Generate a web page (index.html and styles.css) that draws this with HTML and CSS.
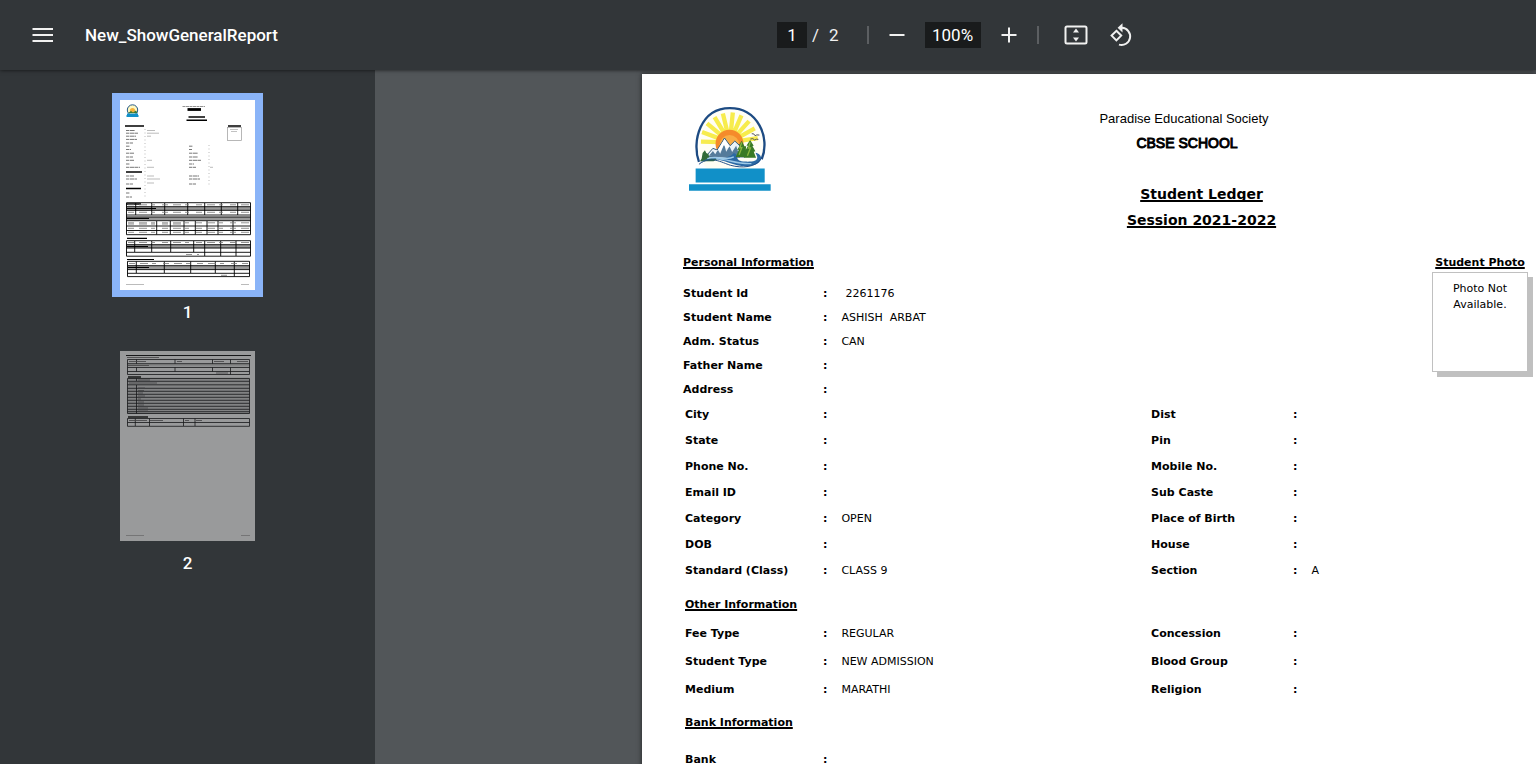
FILE: index.html
```html
<!DOCTYPE html>
<html lang="en">
<head>
<meta charset="utf-8">
<title>New_ShowGeneralReport</title>
<link rel="stylesheet" href="styles.css">
</head>
<body>
<header class="toolbar">
  <div class="toolbar-start">
    <button class="icon-button menu-button" type="button" aria-label="Menu">
      <svg width="22" height="16" viewBox="0 0 22 16" stroke="currentColor" stroke-width="2"><path d="M0.500 2H21M0.500 8H21M0.500 14H21"/></svg>
    </button>
    <h1 class="file-name">New_ShowGeneralReport</h1>
  </div>
  <div class="toolbar-controls">
    <input class="field page-field" type="text" value="1" aria-label="Page number">
    <span class="page-total"><span>/</span><span>2</span></span>
    <span class="divider"></span>
    <button class="icon-button zoom-out" type="button" aria-label="Zoom out">
      <svg width="16" height="16" viewBox="0 0 16 16" stroke="currentColor" stroke-width="2"><path d="M0.500 8H15.500"/></svg>
    </button>
    <input class="field zoom-field" type="text" value="100%" aria-label="Zoom level">
    <button class="icon-button zoom-in" type="button" aria-label="Zoom in">
      <svg width="16" height="16" viewBox="0 0 16 16" stroke="currentColor" stroke-width="2"><path d="M0.500 8H15.500M8 0.500V15.500"/></svg>
    </button>
    <span class="divider"></span>
    <button class="icon-button fit-button" type="button" aria-label="Fit to page">
      <svg width="24" height="20" viewBox="0 0 24 20"><rect x="1.500" y="1.500" width="21" height="17" rx="1.500" fill="none" stroke="currentColor" stroke-width="2"/><path d="M12 3.500L15 7.500H9ZM12 16.500L9 12.500H15Z" fill="currentColor"/></svg>
    </button>
    <button class="icon-button" type="button" aria-label="Rotate counterclockwise">
      <svg width="24" height="24" viewBox="0 0 24 24" fill="none" stroke="currentColor" stroke-width="2"><path d="M7.400 7.800L12.200 12.600L7.400 17.400L2.600 12.600Z"/><path d="M11 4.800H13A8.600 8.600 0 1 1 10 21.600"/><path d="M13.500 0.200V9.400L8.600 4.800Z" fill="currentColor" stroke="none"/></svg>
    </button>
  </div>
</header>
<div class="workspace">
  <nav class="sidebar" aria-label="Page thumbnails">
    <a class="thumb thumb-current" href="#page-1">
      <span class="thumb-frame">
      <svg class="thumb-page" width="135" height="190" viewBox="0 0 135 190">
        <rect width="135" height="190" fill="#fff"/>
        <circle cx="12.500" cy="10" r="5.200" fill="#fff8c0" stroke="#24588b"/>
        <circle cx="12.500" cy="10.500" r="2.600" fill="#f7b23b"/>
        <path d="M8 13L11 11L13 12.500L16 10.500L17.500 13Z" fill="#397a36"/>
        <path d="M7 14.500H18M6.500 16H18.500" stroke="#1290c8" stroke-width="2"/>
        <g stroke="#000" fill="none">
          <path d="M62.500 6.500H85" stroke="#666" stroke-width="0.700" stroke-dasharray="3 .5"/>
          <path d="M67.500 9.500H81" stroke-width="2.800"/>
          <path d="M68.500 17H85M66.500 20.200H87" stroke-width="1.400"/>
          <path d="M5 26H24M108 26H121M6 72H22M6 88.500H21M6 104H21" stroke-width="1.500"/>
        </g>
        <g stroke="#777" stroke-width="1" stroke-dasharray="3 .6 5 .4">
          <path d="M6 30.500H15M6 33.200H18M6 36.200H16M6 39.400H17M6 43H13M6 46.200H10M6 49.500H11M6 53.200H14M6 57H13M6 60.300H14M6 64H10M6 67.300H20M6 76H14M6 79H17M6 84H13M6 93H10M6 97H12"/>
          <path d="M69 46.200H73M69 49.500H72M69 53.200H78M69 57H78M69 60.300H81M69 64H74M69 67.300H76M69 76H79M69 79H80M69 84H76"/>
        </g>
        <g stroke="#aaa" stroke-width="0.800">
          <path d="M27 30.500H35M27 33.200H39M27 36.200H31M27 60.300H32M27 67.300H34M27 76H34M27 79H40M27 83H34M90 67.300H93"/>
          <path d="M25 29V99M89 45V85" stroke-dasharray="1 2.500"/>
          <path d="M6 184.500H24M121 184.500H129"/>
        </g>
        <rect x="107.500" y="27.500" width="14" height="13" fill="#fff" stroke="#999" stroke-width="0.700"/>
        <path d="M110 29.500H118M111 31.500H117" stroke="#999" stroke-width="0.600"/>
        <path d="M6.500 108.500H130.500M6.500 118.500H130.500M6.500 146.500H130.500M7.500 167.500H129.500" stroke="#999" stroke-width="3.500"/>
        <g fill="none" stroke="#000" stroke-width="0.900">
          <path d="M6.500 102.700H130.500V134.700H6.500ZM6.500 106.700H130.500M6.500 110.300H130.500M6.500 115H130.500M6.500 117H130.500M6.500 120.700H130.500M6.500 126H130.500M6.500 130.500H130.500"/>
          <path d="M15.700 103V115M31.700 103V115M44.700 103V115M67.700 103V115M84.700 103V115M101.300 103V115M117.700 103V115M36.700 121V134.500M50.300 121V134.500M64 121V134.500M75.300 121V134.500M87 121V134.500M98 121V134.500M113 121V134.500"/>
          <path d="M6.500 140.700H130.500V156.200H6.500ZM6.500 144.700H130.500M6.500 148H130.500M6.500 152.300H130.500M14.700 141V152M31.700 141V152M50.700 141V152M73.700 141V152M84.700 141V156M100.700 141V156M116 141V156"/>
          <path d="M7.500 161.300H129.500V176.600H7.500ZM7.500 165.700H129.500M7.500 169.600H129.500M7.500 173.300H129.500M16.300 161.500V173M44.300 161.500V173M70.700 161.500V173M95.300 161.500V173M114.300 161.500V176.500"/>
          <path d="M7 138.300H27M7 159.500H34M7 108.500H36M7 118.500H29M7 146.500H28M8 167.500H29" stroke-width="1.200"/>
        </g>
        <path d="M8 104.800H129M8 112.300H129M8 122.800H129M8 124H64M8 128.300H129M8 132.300H129M8 142.500H129M66 154.500H79M9 163.500H128M101 175.300H112" stroke="#777" stroke-width="0.800" stroke-dasharray="6 5 8 4 4 7"/>
      </svg>
      </span>
      <span class="thumb-label">1</span>
    </a>
    <a class="thumb" href="#page-2">
      <span class="thumb-frame">
      <svg class="thumb-page" width="135" height="190" viewBox="0 0 135 190">
        <rect width="135" height="190" fill="#999a9b"/>
        <path d="M7.500 14H129.500M7.500 28H129.500" stroke="#858687" stroke-width="3"/>
        <rect x="7.500" y="28" width="122" height="35" fill="#818283"/>
        <g fill="none" stroke="#171819" stroke-width="0.800">
          <path d="M6 4.500H131" stroke-width="1"/>
          <path d="M7.500 8.500H129.500V23.500H7.500ZM7.500 12.700H129.500M7.500 16.500H129.500M7.500 20.500H129.500M16.500 8.500V12.700M16.500 16.500V20.500M55 8.500V12.700M55 16.500V20.500M92.500 8.500V12.700M92.500 16.500V20.500M110.500 8.500V12.700M110.500 16.500V23.500"/>
          <path d="M7.500 27.500H129.500V62.500H7.500ZM7.500 30.300H129.500M7.500 33.800H129.500M16.500 27.500V30M16.500 34V62.500M7.500 37.300H129.500M7.500 40.300H129.500M7.500 43.300H129.500M7.500 46.300H129.500M7.500 49.300H129.500M7.500 52.300H129.500M7.500 55.300H129.500M7.500 58.300H129.500M7.500 60.700H129.500"/>
          <path d="M7.500 67.500H129.500V75.300H7.500ZM7.500 71.500H129.500M15.300 67.500V75M29.500 67.500V75M63.500 67.500V75M75 67.500V75"/>
          <path d="M8 26H21M8 66H28" stroke-width="1.500"/>
        </g>
        <path d="M7 6.500H39M9 10.500H26M57 10.500H62M94 10.500H104M117 10.500H128M8 14.500H29M96 22H108M9 32H37M18 29H30M18 37H25M18 39.500H24M18 42H23M18 45H25M18 48H21M18 51H24M18 54H24M18 57H28M18 60H28M9 69.500H27M30 69.500H43M65 69.500H69M76 69.500H82" stroke="#424344" stroke-width="0.800"/>
        <path d="M6 184.500H24M121 184.500H130" stroke="#666" stroke-width="0.700"/>
      </svg>
      </span>
      <span class="thumb-label">2</span>
    </a>
  </nav>
  <main class="viewer">
    <article class="sheet" id="page-1">
      <header class="letterhead">
        <svg class="logo" width="82" height="86" viewBox="58 50 247 256" role="img" aria-label="School logo">
          <circle cx="181" cy="161" r="102" fill="#fffef4"/>
          <g stroke="#f7ec4d" stroke-width="13">
            <path d="M181 158L94 156M181 158L97 127M181 158L112 101M181 158L135 82M181 158L160 71M181 158L190 68M181 158L216 77M181 158L239 94M181 158L256 116M181 158L265 145"/>
          </g>
          <circle cx="180" cy="162" r="42" fill="#f58b2b"/>
          <circle cx="180" cy="166" r="30" fill="#f9ad45"/>
          <path d="M88 217C66 157 91 55 181 55C264 55 304 142 277 209" fill="none" stroke="#1d4b83" stroke-width="7"/>
          <path d="M91 205C74 144 107 66 180 63C248 61 290 132 273 194" fill="none" stroke="#fff" stroke-width="3"/>
          <path d="M108 201L130 176L143 181L165 145L182 168L196 154L214 171L226 202Z" fill="#eaf2f8" stroke="#315b7f" stroke-width="3"/>
          <path d="M118 198L130 184L137 194L145 180L152 192L164 163L170 186L180 170L188 187L200 168L212 204Z" fill="#547b9b"/>
          <path d="M132 187L143 183L165 148L180 170L171 177L163 165L153 184L145 180Z" fill="#fff"/>
          <path d="M96 207L99 190L106 182L110 190L117 194L119 204L146 207L132 215H91Z" fill="#326b36"/>
          <path d="M90 220C121 192 172 218 193 190C213 198 190 214 228 216C259 217 272 211 258 189C285 193 283 229 232 230C180 231 139 188 90 220Z" fill="#2b69a4"/>
          <path d="M113 207C149 195 165 216 193 202M139 207C177 208 197 224 246 222" fill="none" stroke="#9dcae8" stroke-width="4"/>
          <path d="M217 153L208 167L212 166L203 181L208 180L199 202H230L235 181L229 182L230 170L225 170ZM242 151L231 168L236 168L225 187L231 187L223 204H260L253 186L258 185L249 169L253 168Z" fill="#397a25"/>
          <path d="M217 158L211 175L217 174L209 195M242 158L237 175L243 175L234 198" fill="none" stroke="#8bb840" stroke-width="4"/>
          <path d="M247 132Q254 130 257 138Q261 134 270 136M243 148Q251 144 256 151Q260 147 267 149" fill="none" stroke="#555" stroke-width="3"/>
          <path d="M88 224C124 196 156 219 183 227C216 236 260 235 277 205" fill="none" stroke="#214f88" stroke-width="3"/>
          <path d="M78 237H286V279H78ZM58 284H304V304H58Z" fill="#1190c8"/>
        </svg>
        <div class="titles">
          <p class="society">Paradise Educational Society</p>
          <p class="school">CBSE SCHOOL</p>
          <div class="report-titles">
            <h2 class="report-title">Student Ledger</h2>
            <h2 class="report-title">Session 2021-2022</h2>
          </div>
        </div>
      </header>

      <section class="personal">
        <div class="identity">
          <h3 class="section-title">Personal Information</h3>
          <dl class="fields">
            <div class="row"><dt>Student Id</dt><dd class="id-value">2261176</dd></div>
            <div class="row"><dt>Student Name</dt><dd>ASHISH&nbsp; ARBAT</dd></div>
            <div class="row"><dt>Adm. Status</dt><dd>CAN</dd></div>
            <div class="row"><dt>Father Name</dt><dd></dd></div>
            <div class="row"><dt>Address</dt><dd></dd></div>
          </dl>
        </div>
        <figure class="photo">
          <figcaption class="section-title">Student Photo</figcaption>
          <div class="photo-box">Photo Not Available.</div>
        </figure>
      </section>

      <section class="details">
        <dl class="fields pairs">
          <div class="row"><dt>City</dt><dd></dd></div>
          <div class="row"><dt>Dist</dt><dd></dd></div>
          <div class="row"><dt>State</dt><dd></dd></div>
          <div class="row"><dt>Pin</dt><dd></dd></div>
          <div class="row"><dt>Phone No.</dt><dd></dd></div>
          <div class="row"><dt>Mobile No.</dt><dd></dd></div>
          <div class="row"><dt>Email ID</dt><dd></dd></div>
          <div class="row"><dt>Sub Caste</dt><dd></dd></div>
          <div class="row"><dt>Category</dt><dd>OPEN</dd></div>
          <div class="row"><dt>Place of Birth</dt><dd></dd></div>
          <div class="row"><dt>DOB</dt><dd></dd></div>
          <div class="row"><dt>House</dt><dd></dd></div>
          <div class="row"><dt>Standard (Class)</dt><dd>CLASS 9</dd></div>
          <div class="row"><dt>Section</dt><dd>A</dd></div>
        </dl>
      </section>

      <section class="details other">
        <h3 class="section-title">Other Information</h3>
        <dl class="fields pairs roomy">
          <div class="row"><dt>Fee Type</dt><dd>REGULAR</dd></div>
          <div class="row"><dt>Concession</dt><dd></dd></div>
          <div class="row"><dt>Student Type</dt><dd>NEW ADMISSION</dd></div>
          <div class="row"><dt>Blood Group</dt><dd></dd></div>
          <div class="row"><dt>Medium</dt><dd>MARATHI</dd></div>
          <div class="row"><dt>Religion</dt><dd></dd></div>
        </dl>
      </section>

      <section class="details bank">
        <h3 class="section-title">Bank Information</h3>
        <dl class="fields pairs roomy">
          <div class="row"><dt>Bank</dt><dd></dd></div>
        </dl>
      </section>
    </article>
  </main>
</div>
</body>
</html>
```
FILE: styles.css
```css
* { box-sizing: border-box; }

body {
  display: flex;
  flex-direction: column;
  height: 100vh;
  margin: 0;
  overflow: hidden;
  background: #525659;
  font-family: Roboto, "Liberation Sans", sans-serif;
}

h1, h2, h3, p, dl, dd, figure { margin: 0; }

/* Toolbar */
.toolbar {
  z-index: 1;
  display: grid;
  grid-template-columns: 1fr 1fr;
  flex: none;
  height: 70px;
  background: #323639;
  color: #f1f1f1;
  box-shadow: 0 0 4px rgba(0, 0, 0, 0.7);
}

.toolbar-start,
.toolbar-controls {
  display: flex;
  align-items: center;
}

.toolbar-start { padding-left: 32px; }
.toolbar-controls { padding-left: 9px; }

.icon-button {
  display: flex;
  flex: none;
  padding: 0;
  border: 0;
  background: none;
  color: inherit;
}

.icon-button svg { display: block; }
.menu-button { margin-right: 31px; }

.file-name {
  color: #fff;
  font-size: 17px;
  font-weight: 500;
}

.field {
  height: 26px;
  padding: 0;
  border: 0;
  background: #191b1c;
  color: #fff;
  font-family: inherit;
  font-size: 17px;
  text-align: center;
}

.page-field { width: 30px; }
.zoom-field { width: 56px; }

.page-total {
  display: flex;
  gap: 10px;
  margin: 0 28px 0 5px;
  font-size: 17px;
}

.divider {
  width: 2px;
  height: 18px;
  background: #5c5f62;
}

.zoom-out { margin: 0 20px; }
.zoom-in { margin: 0 20px; }
.fit-button { margin: 0 21px 0 25px; }

/* Thumbnails */
.workspace {
  display: flex;
  flex: 1;
  min-height: 0;
}

.sidebar {
  display: flex;
  flex: none;
  flex-direction: column;
  align-items: center;
  gap: 20px;
  width: 375px;
  padding-top: 23px;
  background: #323639;
}

.thumb {
  display: flex;
  flex-direction: column;
  align-items: center;
  color: #fff;
  text-decoration: none;
}

.thumb-frame { padding: 7px 8px; }
.thumb-current .thumb-frame { background: #8ab4f8; }
.thumb-page { display: block; }

.thumb-label {
  padding-top: 3px;
  font-size: 17px;
  font-weight: 500;
  line-height: 24px;
}

/* Document */
.viewer {
  flex: 1;
  min-width: 0;
  padding: 4px 0 0 267px;
  overflow: hidden;
}

.sheet {
  min-height: 100%;
  padding: 32px 8px 32px 41px;
  background: #fff;
  color: #000;
  font-family: Verdana, "DejaVu Sans", sans-serif;
  font-size: 11px;
  box-shadow: 0 0 5px rgba(0, 0, 0, 0.6);
}

.letterhead {
  display: grid;
  grid-template-columns: 157px 1fr;
}

.logo { margin-left: 6px; }

.titles {
  padding-top: 3px;
  text-align: center;
}

.society,
.school { font-family: "Liberation Sans", Arial, sans-serif; }

.society {
  font-size: 13px;
  line-height: 20px;
}

.school {
  margin-bottom: 24px;
  padding-left: 6px;
  font-size: 14px;
  line-height: 28px;
  -webkit-text-stroke: 1px #000;
}

.report-titles { padding-left: 35px; }

.report-title {
  font-size: 14px;
  line-height: 26px;
  text-decoration: underline 2px;
  text-underline-offset: 1px;
  text-decoration-skip-ink: none;
}

.section-title {
  font-size: 11px;
  font-weight: 700;
  line-height: 30px;
  text-decoration: underline 2px;
  text-underline-offset: 1px;
  text-decoration-skip-ink: none;
}

.personal {
  display: flex;
  justify-content: space-between;
  padding-top: 15px;
}

.identity .fields { padding-top: 4px; }

.row {
  display: grid;
  grid-template-columns: 140px 1fr;
  line-height: 24px;
}

.row dt { font-weight: 700; }

.row dd {
  display: flex;
  gap: 14px;
}

.row dd::before {
  content: ":";
  font-weight: 700;
}

.row .id-value { gap: 18px; }

.photo {
  width: 96px;
  text-align: center;
  white-space: nowrap;
}

.photo-box {
  height: 100px;
  margin-top: -6px;
  padding: 8px 16px;
  border: 1px solid #c0c0c0;
  background: #fff;
  box-shadow: 5px 5px #c0c0c0;
  line-height: 16px;
  white-space: normal;
}

.details { padding: 0 4px 0 2px; }
.details .row { line-height: 26px; }
.details .roomy .row { line-height: 28px; }

.pairs {
  display: grid;
  grid-template-columns: 5fr 4fr;
}

.pairs .row { grid-template-columns: 138px 1fr; }
.pairs .row:nth-child(even) { grid-template-columns: 142px 1fr; }

.other { padding-top: 6px; }
.bank { padding-top: 4px; }
.bank .fields { padding-top: 8px; }
```
